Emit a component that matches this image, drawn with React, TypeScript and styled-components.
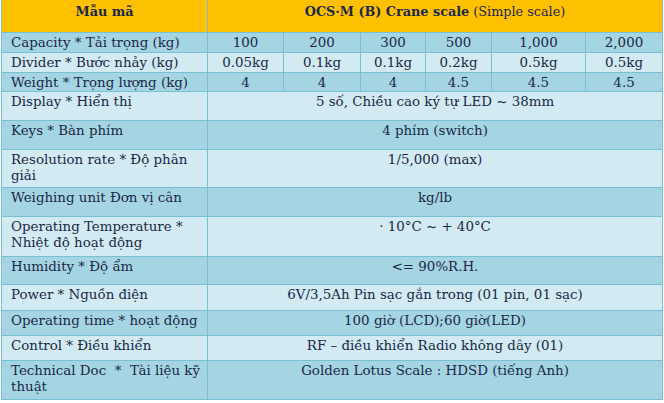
import styled, { createGlobalStyle } from "styled-components";

const GlobalStyle = createGlobalStyle`
  html, body {
    margin: 0;
    padding: 0;
    background: #ffffff;
  }
`;

const FONT = `"DejaVu Serif", "Liberation Serif", serif`;

type Row = {
  label: string;
  height: number;
  dark: boolean;
  values?: string[];
  merged?: string;
};

const rows: Row[] = [
  { label: "Capacity * Tải trọng (kg)", height: 20, dark: true, values: ["100", "200", "300", "500", "1,000", "2,000"] },
  { label: "Divider * Bước nhảy (kg)", height: 20, dark: false, values: ["0.05kg", "0.1kg", "0.1kg", "0.2kg", "0.5kg", "0.5kg"] },
  { label: "Weight * Trọng lượng (kg)", height: 19, dark: true, values: ["4", "4", "4", "4.5", "4.5", "4.5"] },
  { label: "Display * Hiển thị", height: 29, dark: false, merged: "5 số, Chiều cao ký tự LED ~ 38mm" },
  { label: "Keys * Bàn phím", height: 29, dark: true, merged: "4 phím (switch)" },
  { label: "Resolution rate * Độ phân giải", height: 38, dark: false, merged: "1/5,000 (max)" },
  { label: "Weighing unit Đơn vị cân", height: 29, dark: true, merged: "kg/lb" },
  { label: "Operating Temperature * Nhiệt độ hoạt động", height: 40, dark: false, merged: "· 10°C ~ + 40°C" },
  { label: "Humidity * Độ ẩm", height: 28, dark: true, merged: "<= 90%R.H." },
  { label: "Power * Nguồn điện", height: 26, dark: false, merged: "6V/3,5Ah Pin sạc gắn trong (01 pin, 01 sạc)" },
  { label: "Operating time * hoạt động", height: 25, dark: true, merged: "100 giờ (LCD);60 giờ(LED)" },
  { label: "Control * Điều khiển", height: 25, dark: false, merged: "RF – điều khiển Radio không dây (01)" },
  { label: "Technical Doc\u00a0 *\u00a0 Tài liệu kỹ thuật", height: 39, dark: true, merged: "Golden Lotus Scale : HDSD (tiếng Anh)" },
];

const colWidths = [206, 76, 77, 65, 66, 94, 77];

export default function App() {
  return (
    <Page>
      <GlobalStyle />
      <Table>
        <colgroup>
          {colWidths.map((w, i) => (
            <col key={i} style={{ width: w }} />
          ))}
        </colgroup>
        <thead>
          <HeadRow>
            <HeadCell>Mẫu mã</HeadCell>
            <HeadCell colSpan={6}>
              <b>OCS·M (B) Crane scale</b> (Simple scale)
            </HeadCell>
          </HeadRow>
        </thead>
        <tbody>
          {rows.map((r) => (
            <BodyRow key={r.label} $dark={r.dark} style={{ height: r.height }}>
              <LabelCell>{r.label}</LabelCell>
              {r.merged ? (
                <ValueCell colSpan={6}>{r.merged}</ValueCell>
              ) : (
                r.values!.map((v, i) => <ValueCell key={i}>{v}</ValueCell>)
              )}
            </BodyRow>
          ))}
        </tbody>
      </Table>
    </Page>
  );
}

const Page = styled.div`
  padding: 0 0 0 1px;
  width: 664px;
  box-sizing: border-box;
`;

const Table = styled.table`
  border-collapse: collapse;
  table-layout: fixed;
  width: 661px;
  font-family: ${FONT};
  font-size: 13.4px;
  color: #1a2848;
`;

const HeadRow = styled.tr`
  height: 32px;
  background: #ffc000;
`;

const HeadCell = styled.th`
  border: 1px solid #78c0d4;
  border-top: none;
  padding: 3px 4px 0;
  vertical-align: top;
  text-align: center;
  font-weight: normal;
  font-size: 12.8px;
  line-height: 17px;
  &:first-child {
    font-weight: bold;
  }
`;

const BodyRow = styled.tr<{ $dark: boolean }>`
  background: ${(p) => (p.$dark ? "#a5d5e2" : "#d2eaf1")};
`;

const LabelCell = styled.td`
  border: 1px solid #78c0d4;
  padding: 2px 4px 0 9px;
  vertical-align: top;
  text-align: left;
  line-height: 16px;
`;

const ValueCell = styled.td`
  border: 1px solid #78c0d4;
  padding: 2px 2px 0;
  vertical-align: top;
  text-align: center;
  line-height: 16px;
  white-space: nowrap;
`;
